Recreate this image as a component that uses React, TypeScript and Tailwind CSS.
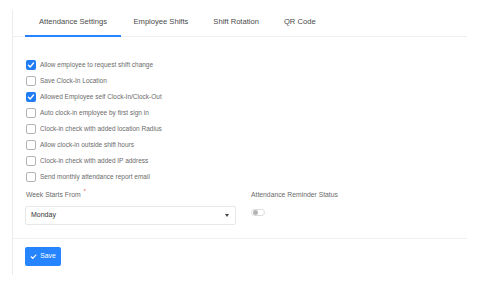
import { useState } from 'react'

const tabs = ['Attendance Settings', 'Employee Shifts', 'Shift Rotation', 'QR Code']

const options = [
  { label: 'Allow employee to request shift change', checked: true },
  { label: 'Save Clock-In Location', checked: false },
  { label: 'Allowed Employee self Clock-In/Clock-Out', checked: true },
  { label: 'Auto clock-in employee by first sign in', checked: false },
  { label: 'Clock-in check with added location Radius', checked: false },
  { label: 'Allow clock-in outside shift hours', checked: false },
  { label: 'Clock-in check with added IP address', checked: false },
  { label: 'Send monthly attendance report email', checked: false },
]

function CheckBox({ checked }: { checked: boolean }) {
  if (checked) {
    return (
      <span className="flex h-[10px] w-[10px] items-center justify-center rounded-[2px] bg-[#1f7cf2]">
        <svg width="8" height="8" viewBox="0 0 12 12" fill="none">
          <path d="M2.2 6.4 L4.8 9 L9.8 3" stroke="white" strokeWidth="2" strokeLinecap="round" strokeLinejoin="round" />
        </svg>
      </span>
    )
  }
  return <span className="h-[10px] w-[10px] rounded-[2px] border border-[#b4b4b4] bg-white" />
}

export default function App() {
  const [active] = useState(0)

  return (
    <div className="h-[282px] w-[490px] bg-white font-['Liberation_Sans',Arial,sans-serif]">
      <div className="pl-[12px] pt-[10px]">
        <div className="flex h-[265px] w-[455px] flex-col border-l border-[#ececec]">
          <div className="flex h-[27px] border-b border-[#f0f0f0] pl-[12px]">
            {tabs.map((t, i) => (
              <div
                key={t}
                className={
                  i === active
                    ? 'relative -mb-px flex items-center border-b-2 border-[#2684ff] px-[14px] pb-[2px] text-[7.6px] text-[#4a4a4a]'
                    : 'flex items-center px-[12.5px] pb-[2px] text-[7.6px] text-[#4a4a4a]'
                }
              >
                {t}
              </div>
            ))}
          </div>

          <div className="flex flex-col pl-[12px] pt-[20px]">
            {options.map((o) => (
              <div key={o.label} className="flex h-[16px] items-center gap-[4px] pl-[1px]">
                <CheckBox checked={o.checked} />
                <span className="text-[6.5px] text-[#6b6b6b]">{o.label}</span>
              </div>
            ))}

            <div className="mt-[5px] flex gap-[15px]">
              <div className="flex w-[211px] flex-col">
                <div className="flex h-[10px] items-center pl-[1px] text-[6.8px] text-[#6b6b6b]">
                  Week Starts From
                  <span className="-mt-[7px] ml-[3px] text-[5px] text-[#e53935]">*</span>
                </div>
                <div className="mt-[6px] flex h-[19px] items-center justify-between rounded-[2px] border border-[#e8e8e8] pl-[5px] pr-[6px]">
                  <span className="text-[7px] text-[#333333]">Monday</span>
                  <svg width="4" height="3" viewBox="0 0 4 3">
                    <path d="M0 0 H4 L2 3 Z" fill="#444444" />
                  </svg>
                </div>
              </div>
              <div className="flex flex-col">
                <div className="flex h-[10px] items-center text-[6.8px] text-[#6b6b6b]">Attendance Reminder Status</div>
                <div className="mt-[9px] flex h-[7px] w-[14px] items-center rounded-full border border-[#dcdcdc] bg-white pl-[1px]">
                  <span className="h-[5px] w-[5px] rounded-full bg-[#b5b5b5]" />
                </div>
              </div>
            </div>
          </div>

          <div className="mt-[13px] border-t border-[#f0f0f0]" />

          <div className="pl-[12px] pt-[8px]">
            <button className="flex h-[19px] w-[36px] items-center justify-center gap-[3px] rounded-[2px] bg-[#2684ff] text-[6.8px] text-white">
              <svg width="7" height="7" viewBox="0 0 12 12" fill="none">
                <path d="M2 6.5 L4.8 9.2 L10 3.5" stroke="white" strokeWidth="2" strokeLinecap="round" strokeLinejoin="round" />
              </svg>
              Save
            </button>
          </div>
        </div>
      </div>
    </div>
  )
}
